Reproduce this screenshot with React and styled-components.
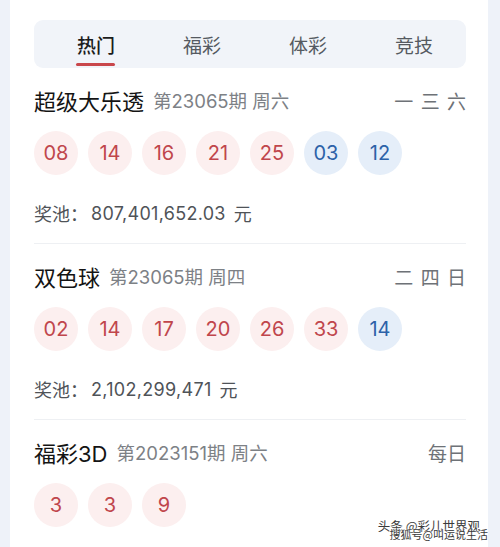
import React from "react";
import styled, { createGlobalStyle } from "styled-components";

const GlobalStyle = createGlobalStyle`
  body {
    margin: 0;
    background: #eef2f9;
    font-family: Inter, "Noto Sans CJK SC", "Noto Sans", sans-serif;
  }
`;

const Page = styled.div`
  position: relative;
  width: 500px;
  height: 547px;
  overflow: hidden;
  padding: 0 12px 0 10px;
  box-sizing: border-box;
`;

const Card = styled.div`
  background: #ffffff;
  height: 100%;
  padding: 20px 22px 0 24px;
  box-sizing: border-box;
`;

const TabBar = styled.div`
  display: grid;
  grid-template-columns: repeat(4, 106px);
  height: 48px;
  padding-left: 9px;
  background: #f1f4f9;
  border-radius: 9px;
`;

const Tab = styled.div`
  position: relative;
  display: flex;
  align-items: center;
  justify-content: center;
  font-size: 19px;
  color: ${(p) => (p.$active ? "#1c1c1c" : "#555a61")};
  font-weight: ${(p) => (p.$active ? 500 : 400)};

  &::after {
    content: "";
    display: ${(p) => (p.$active ? "block" : "none")};
    position: absolute;
    bottom: 2px;
    left: 50%;
    width: 39px;
    height: 3px;
    margin-left: -20px;
    border-radius: 2px;
    background: #c9474b;
  }
`;

const Section = styled.div`
  border-bottom: ${(p) => (p.$last ? "none" : "1px solid #eef0f3")};
  padding-bottom: 18px;
`;

const TitleRow = styled.div`
  display: flex;
  align-items: center;
  height: 30px;
  margin-top: 17px;
`;

const Name = styled.span`
  font-size: 22px;
  color: #141414;
`;

const Issue = styled.span`
  margin-left: 9px;
  font-size: 18.5px;
  color: #7d8186;
`;

const Days = styled.span`
  margin-left: auto;
  font-size: 19px;
  color: #6e7277;
  word-spacing: 2px;
`;

const Balls = styled.div`
  display: flex;
  gap: 10px;
  margin-top: 16px;
`;

const Ball = styled.div`
  width: 44px;
  height: 44px;
  border-radius: 50%;
  display: flex;
  align-items: center;
  justify-content: center;
  font-size: 20px;
  background: ${(p) => (p.$blue ? "#e5eef9" : "#fcefef")};
  color: ${(p) => (p.$blue ? "#2d62a8" : "#c0464c")};
`;

const Prize = styled.div`
  display: flex;
  align-items: center;
  margin-top: 26px;
  height: 24px;
  font-size: 18px;
  color: #4f5358;
`;

const Amount = styled.span`
  margin-left: 3px;
  font-size: 18px;
  letter-spacing: 0.3px;
`;

const Unit = styled.span`
  margin-left: 8px;
`;

const Watermark = styled.div`
  position: absolute;
  right: 12px;
  bottom: 6px;
  font-family: "Noto Sans CJK SC", sans-serif;
  line-height: 14px;
  color: #3a3a3a;
  text-shadow: 0 0 2px #fff, 0 0 2px #fff;
  text-align: right;
`;

const WatermarkLine = styled.div`
  font-size: ${(p) => p.$size}px;
  margin-right: ${(p) => p.$shift || 0}px;
  margin-top: ${(p) => (p.$overlap ? "-6px" : "0")};
`;

const lotteries = [
  {
    name: "超级大乐透",
    issue: "第23065期 周六",
    days: "一 三 六",
    red: ["08", "14", "16", "21", "25"],
    blue: ["03", "12"],
    prize: "807,401,652.03",
  },
  {
    name: "双色球",
    issue: "第23065期 周四",
    days: "二 四 日",
    red: ["02", "14", "17", "20", "26", "33"],
    blue: ["14"],
    prize: "2,102,299,471",
  },
  {
    name: "福彩3D",
    issue: "第2023151期 周六",
    days: "每日",
    red: ["3", "3", "9"],
    blue: [],
  },
];

const tabs = ["热门", "福彩", "体彩", "竞技"];

export default function App() {
  return (
    <>
      <GlobalStyle />
      <Page>
        <Card>
          <TabBar>
            {tabs.map((t, i) => (
              <Tab key={t} $active={i === 0}>
                {t}
              </Tab>
            ))}
          </TabBar>
          {lotteries.map((l, i) => (
            <Section key={l.name} $last={i === lotteries.length - 1}>
              <TitleRow>
                <Name>{l.name}</Name>
                <Issue>{l.issue}</Issue>
                <Days>{l.days}</Days>
              </TitleRow>
              <Balls>
                {l.red.map((n, j) => (
                  <Ball key={"r" + j}>{n}</Ball>
                ))}
                {l.blue.map((n, j) => (
                  <Ball key={"b" + j} $blue>
                    {n}
                  </Ball>
                ))}
              </Balls>
              {l.prize && (
                <Prize>
                  奖池：<Amount>{l.prize}</Amount>
                  <Unit>元</Unit>
                </Prize>
              )}
            </Section>
          ))}
        </Card>
        <Watermark>
          <WatermarkLine $size={12.5} $shift={8}>头条 @彩儿世界观</WatermarkLine>
          <WatermarkLine $size={11} $overlap>搜狐号@叫运说生活</WatermarkLine>
        </Watermark>
      </Page>
    </>
  );
}
